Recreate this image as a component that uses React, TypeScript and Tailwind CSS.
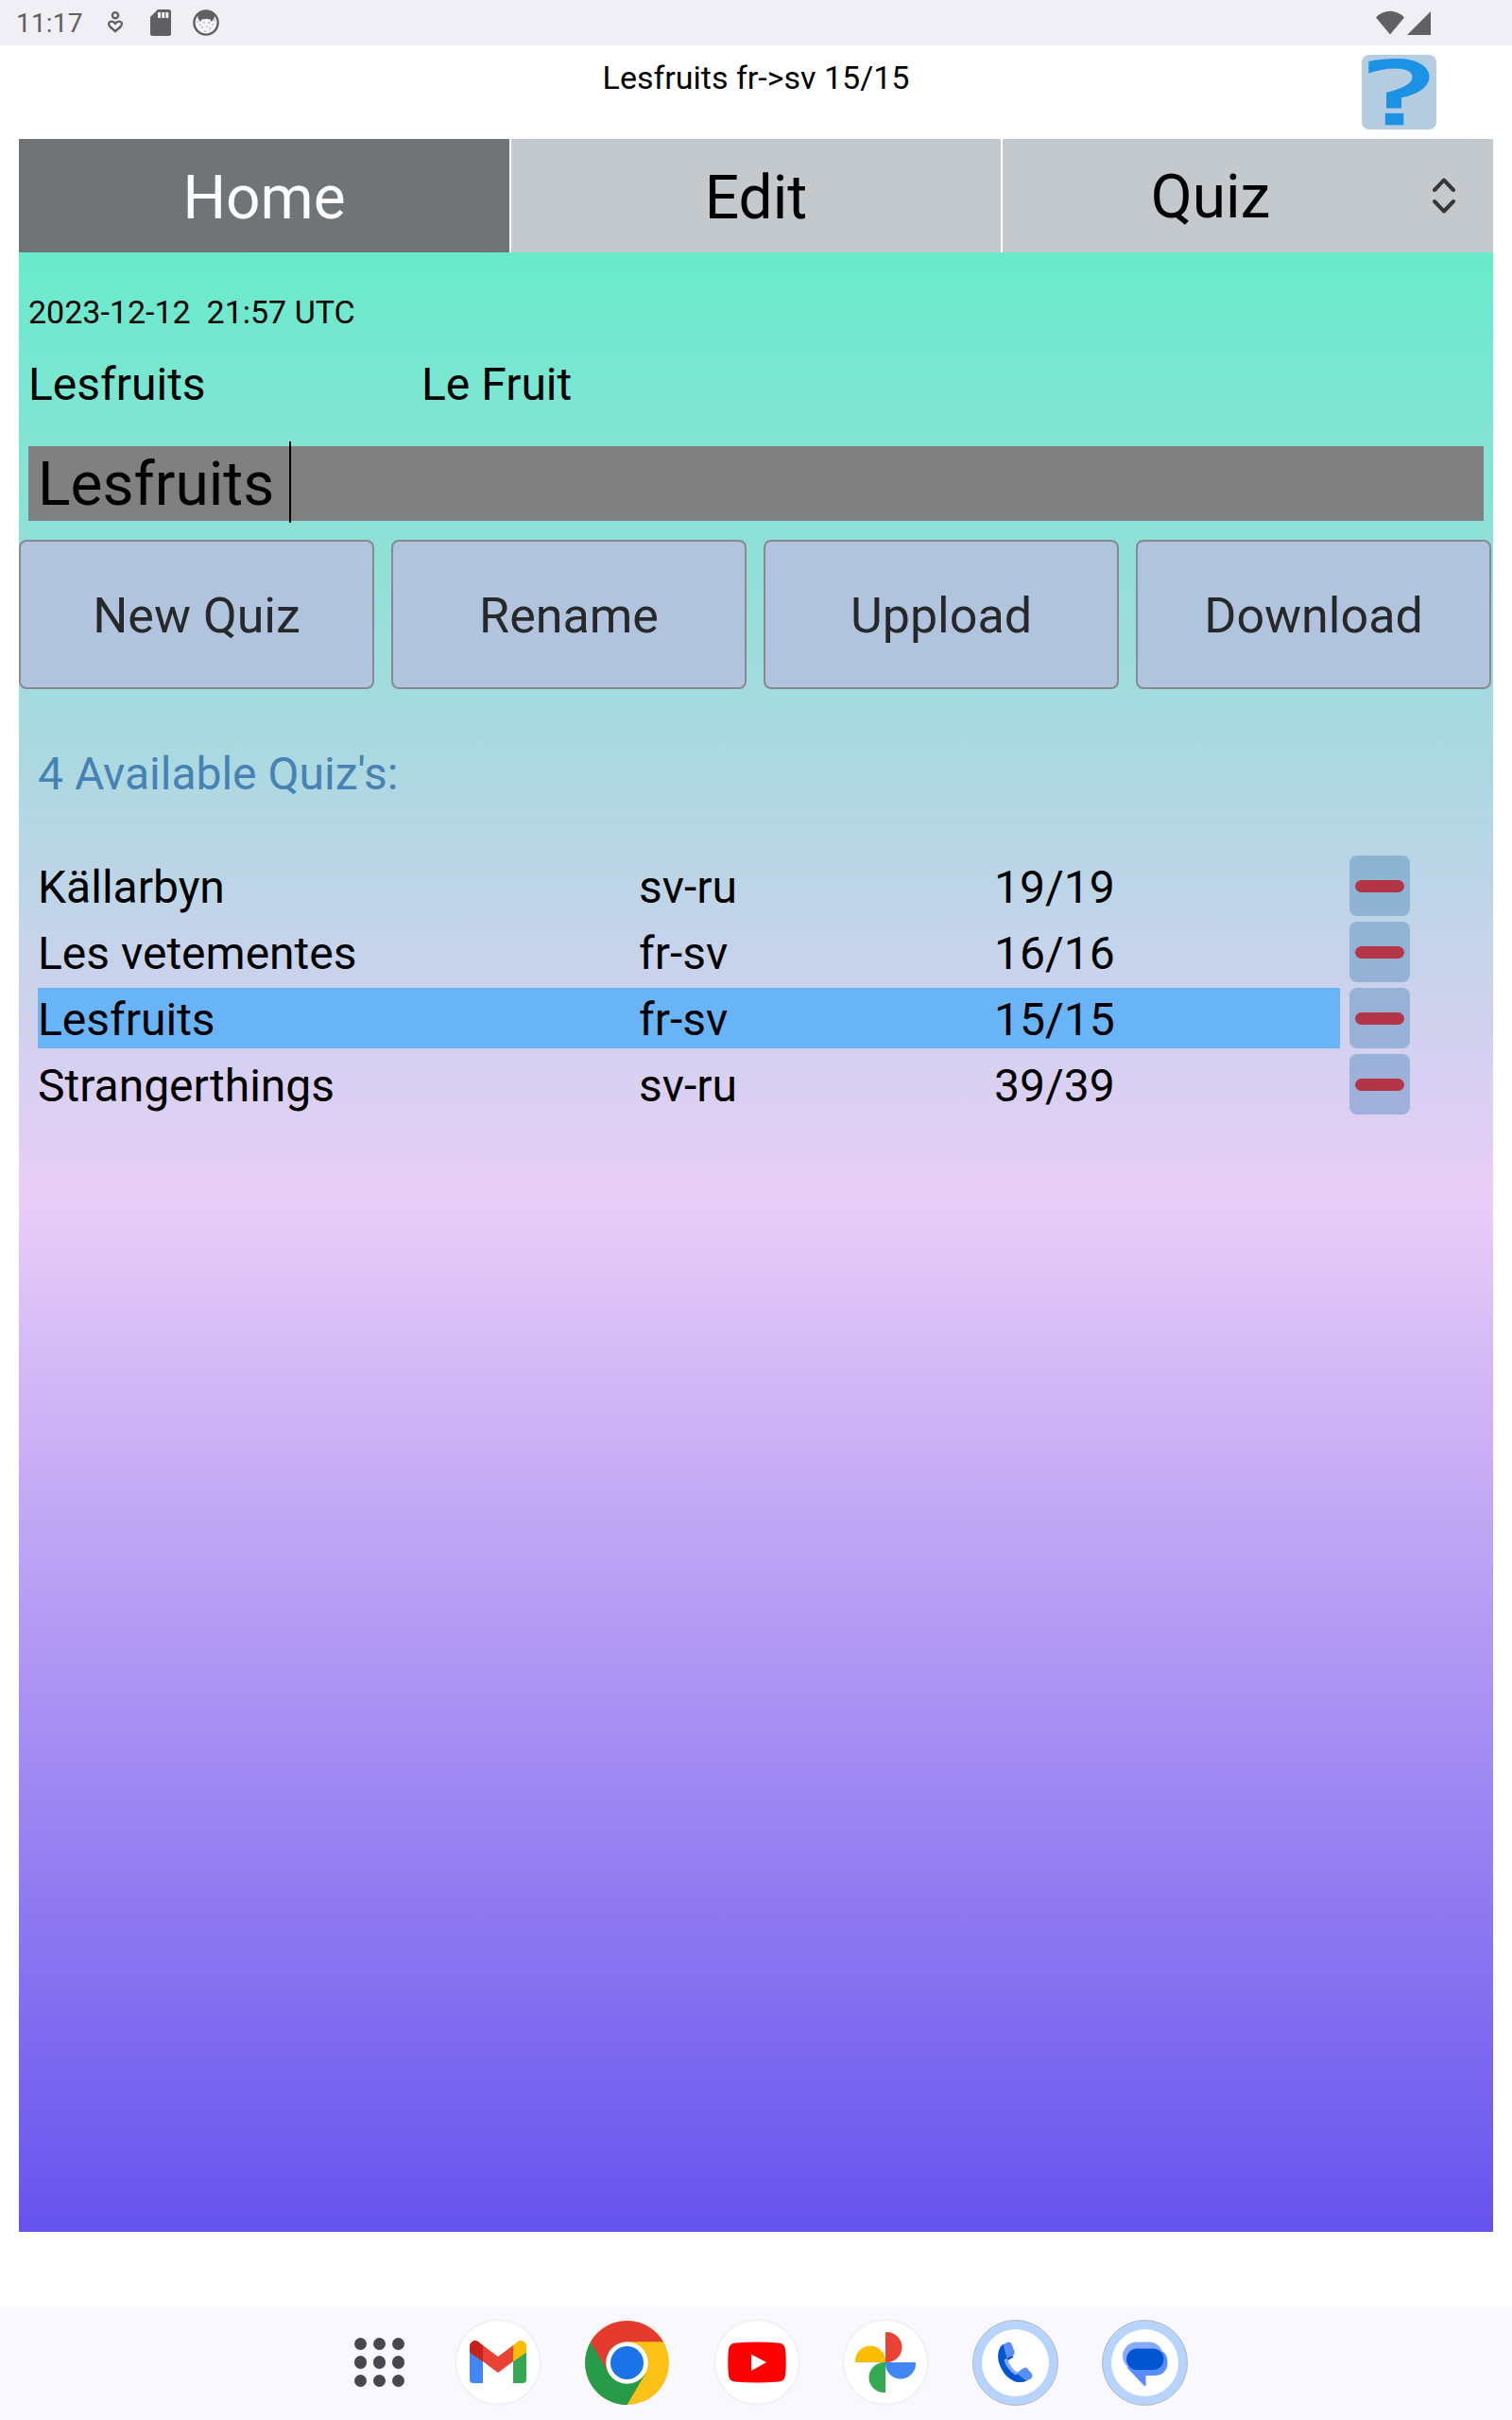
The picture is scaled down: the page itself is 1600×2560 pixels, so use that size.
import React from "react";

const QUIZZES = [
  { name: "Källarbyn", lang: "sv-ru", score: "19/19", active: false },
  { name: "Les vetementes", lang: "fr-sv", score: "16/16", active: false },
  { name: "Lesfruits", lang: "fr-sv", score: "15/15", active: true },
  { name: "Strangerthings", lang: "sv-ru", score: "39/39", active: false },
];

function StatusBar() {
  return (
    <header className="flex h-12 items-center bg-[#f0eff6] pl-[17px] pr-[86px] text-[#606062]">
      <span className="w-[89px] pt-[2px] text-[28px] leading-[48px] tracking-[0.2px]">11:17</span>
      <svg className="ml-[6px]" width="20" height="26" viewBox="0 0 20 26" fill="none" stroke="#606062" strokeWidth="2.4">
        <circle cx="10" cy="5.2" r="3.1" />
        <path d="M10 22.2L4.2 17C2 14.8 3.2 11.6 6 11.6C8 11.6 9.2 12.8 10 14C10.8 12.8 12 11.6 14 11.6C16.8 11.6 18 14.8 15.8 17Z" strokeLinejoin="round" />
      </svg>
      <svg className="ml-[27px]" width="22" height="28" viewBox="0 0 22 28">
        <path d="M8 0H19.5Q22 0 22 2.5V25.5Q22 28 19.5 28H2.5Q0 28 0 25.5V8Z" fill="#606062" />
        <path d="M8 3h3v6H8zM12.2 3h3v6h-3zM16.3 3h3v6h-3z" fill="#f0eff6" />
      </svg>
      <svg className="ml-[23px]" width="28" height="28" viewBox="0 0 28 28">
        <circle cx="14" cy="14" r="12.6" fill="#f4f3fa" stroke="#606062" strokeWidth="2.4" />
        <path d="M5 5.5C10 .5 18 .5 23 5.5C23.5 8 22 11.5 19.5 13L18.5 10.5Q14 9.5 9.5 10.5L8 13C6 11 5 8 5 5.5Z" fill="#606062" />
        <g fill="#8a8a8d">
          <circle cx="8" cy="16" r=".7" /><circle cx="12" cy="14" r=".7" /><circle cx="17" cy="14" r=".8" />
          <circle cx="21" cy="16" r=".7" /><circle cx="10" cy="19" r=".8" /><circle cx="15" cy="18" r=".7" />
          <circle cx="18" cy="20" r=".7" /><circle cx="13" cy="23" r=".8" /><circle cx="23" cy="12" r=".7" />
          <circle cx="5" cy="13" r=".7" />
        </g>
      </svg>
      <svg className="ml-auto" width="30" height="26" viewBox="0 0 30 26">
        <path d="M0 7.5Q6.500 .8 15 .8T30 7.5L15 25.5Z" fill="#606062" />
      </svg>
      <svg className="ml-[3px]" width="25" height="26" viewBox="0 0 25 26">
        <path d="M25 1V26H0Z" fill="#606062" />
      </svg>
    </header>
  );
}

function TitleBar() {
  return (
    <div className="grid h-[99px] grid-cols-[1fr_400px_1fr] px-5">
      <span />
      <h1 className="mt-[10px] text-center text-[34px] leading-[48px]">Lesfruits fr-&gt;sv 15/15</h1>
      <button className="mt-[10px] mr-[60px] h-[79px] w-[79px] justify-self-end rounded-[8px] bg-[#b5cde1]">
        <svg width="79" height="79" viewBox="0 0 79 79" fill="#1c92e4">
          <path d="M7.3 7C17 4.8 27 4 37 4C58 4 71.500 12 71.500 23C71.500 33 62 41 42 45.500V56.500H26V40C43 35.500 53.500 30.500 53.500 23.500C53.500 17.500 46 14.500 35 14.500C25 14.500 16 16.500 7.300 19.500Z" />
          <rect x="24.8" y="61.8" width="19.5" height="12.5" />
        </svg>
      </button>
    </div>
  );
}

function Tabs() {
  return (
    <nav className="grid h-[120px] grid-cols-[519px_518px_519px] gap-x-[2px] bg-white text-center text-[64px] leading-[124px]">
      <span className="h-[120px] bg-[#707476] leading-[125px] text-white">Home</span>
      <span className="h-[120px] bg-[#c4c9cd] leading-[125px]">Edit</span>
      <span className="flex h-[120px] items-center bg-[#c4c9cd]">
        <span className="flex-1 pt-[4px] pr-[15px] leading-[120px]">Quiz</span>
        <svg className="mr-[40px]" width="24" height="40" viewBox="0 0 24 40" fill="none" stroke="#353739" strokeWidth="4" strokeLinecap="round" strokeLinejoin="round">
          <path d="M2 14L12 3.500L22 14M2 26L12 36.500L22 26" />
        </svg>
      </span>
    </nav>
  );
}

function QuizList() {
  return (
    <ul className="mt-[56px] ml-5 flex flex-col gap-[6px] text-[48px] leading-[67px]">
      {QUIZZES.map((q) => (
        <li key={q.name} className="flex h-16 gap-[10px]">
          <div className={q.active ? "grid h-16 w-[1378px] grid-cols-[636px_376px_1fr] bg-[#69b4f6]" : "grid h-16 w-[1378px] grid-cols-[636px_376px_1fr]"}>
            <span>{q.name}</span>
            <span>{q.lang}</span>
            <span>{q.score}</span>
          </div>
          <button className="flex h-16 w-16 items-center justify-center rounded-[8px] bg-[#4682b466]">
            <span className="h-[13px] w-[52px] rounded-full bg-[#b53548]" />
          </button>
        </li>
      ))}
    </ul>
  );
}

function Dock() {
  const round = "flex h-[88px] w-[88px] items-center justify-center rounded-full bg-white shadow-[0_0_3px_rgba(0,0,0,0.12)]";
  const ringed = "flex h-[91px] w-[91px] items-center justify-center rounded-full border border-[#b4b8c4] bg-[#b7d4fe]";
  return (
    <footer className="flex h-[120px] items-center bg-[#f9f8ff] pb-[2px] pl-[375px]">
      <div className="grid grid-cols-3 gap-[6.5px]">
        {[0, 1, 2, 3, 4, 5, 6, 7, 8].map((i) => (
          <span key={i} className="h-[13.3px] w-[13.3px] rounded-full bg-[#474750]" />
        ))}
      </div>
      <div className={`ml-[54.7px] ${round}`}>
        <svg width="60" height="46" viewBox="0 0 60 46">
          <path d="M0 12L14 20V45H4Q0 45 0 41Z" fill="#4285f4" />
          <path d="M60 12L46 20V45H56Q60 45 60 41Z" fill="#34a853" />
          <path d="M14 5L30 17L46 5V22L30 34L14 22Z" fill="#ea4335" />
          <path d="M14 5V22.300L0 12.500V6.500C0 1 6 -2 10 1.800Z" fill="#c5221f" />
          <path d="M46 5V22.300L60 12.500V6.500C60 1 54 -2 50 1.800Z" fill="#fbbc04" />
        </svg>
      </div>
      <svg className="ml-[48.4px]" width="89" height="89" viewBox="0 0 89 89">
        <circle cx="44.5" cy="44.5" r="44.5" fill="#fbc116" />
        <path d="M6 22.250A44.500 44.500 0 0 1 83 22.250H44.500L22 58Z" fill="#e33b2e" />
        <path d="M6 22.250A44.500 44.500 0 0 0 44.500 89L64 56L25 55Z" fill="#279b49" />
        <circle cx="44.5" cy="44.5" r="22.3" fill="#fff" />
        <circle cx="44.5" cy="44.5" r="17.5" fill="#1a73e8" />
      </svg>
      <div className={`ml-[48.6px] ${round}`}>
        <svg width="62" height="44" viewBox="0 0 62 44">
          <path d="M8 1.500Q31 -.5 54 1.500Q60 2 61 8Q62.500 22 61 36Q60 42 54 42.500Q31 44.500 8 42.500Q2 42 1 36Q-.5 22 1 8Q2 2 8 1.500Z" fill="#f00" />
          <path d="M25 13.500V31L41 22Z" fill="#fff" />
        </svg>
      </div>
      <div className={`ml-[48.8px] ${round}`}>
        <svg width="64" height="64" viewBox="0 0 64 64">
          <path d="M32 32V0H33.500A15.800 15.800 0 0 1 33.500 32Z" fill="#ea4335" />
          <path d="M32 32H0V30.500A15.800 15.800 0 0 1 32 30.500Z" fill="#fbbc04" />
          <path d="M32 32V64H30.500A15.800 15.800 0 0 1 30.500 32Z" fill="#34a853" />
          <path d="M32 32H64V33.500A15.800 15.800 0 0 1 32 33.500Z" fill="#4285f4" />
        </svg>
      </div>
      <div className={`ml-[48px] ${ringed}`}>
        <svg width="89" height="89" viewBox="0.5 0.5 89 89">
          <circle cx="45" cy="45" r="35.5" fill="#fff" />
          <path d="M32 25L43 39L36 43Q40 54 48 57L57 64Q52 66.500 45 65Q32 60 27 43Q25 31 32 25Z" fill="#0056d0" />
          <path d="M32 26L36 23.500Q39 22 41 25L44 33Q44.500 36 42 37.500L36 40Z" fill="#598dff" />
          <path d="M33 42L36 40Q40 51 48 56L45 58Q35 51 33 42Z" fill="#88a9ff" />
          <path d="M46 56L53 51Q56 49 58 51.500L62 56Q64.500 59.500 61 62L57 64Z" fill="#598dff" />
        </svg>
      </div>
      <div className={`ml-[46px] ${ringed}`}>
        <svg width="89" height="89" viewBox="0.5 0.5 89 89">
          <circle cx="45" cy="45" r="35.5" fill="#fff" />
          <rect x="21.5" y="23" width="43" height="30" rx="15" fill="#88a9ff" />
          <path d="M26 50L64 33Q69 37 69 44Q69 58 55 58.500H46V69.500Q45 70 43.500 68.500Z" fill="#598dff" />
          <rect x="25.5" y="30" width="39.5" height="22.5" rx="11.25" fill="#0056d0" />
        </svg>
      </div>
    </footer>
  );
}

export default function App() {
  return (
    <div className="flex h-[2560px] w-[1600px] flex-col bg-white font-['Roboto',sans-serif] text-black">
      <StatusBar />
      <TitleBar />
      <main className="mx-5 flex h-[2214px] flex-col">
        <Tabs />
        <section className="flex-1 bg-[linear-gradient(to_bottom,#68ebcb_0%,#b3d7e3_28.3%,#e9cdf8_47.8%,#6653ee_100%)]">
          <p className="ml-[10px] pt-[43px] text-[34px] leading-10 whitespace-pre">2023-12-12  21:57 UTC</p>
          <div className="mt-[27px] ml-[10px] grid grid-cols-[416px_1fr] text-[48px] leading-[60px]">
            <span>Lesfruits</span>
            <span>Le Fruit</span>
          </div>
          <div className="mx-[10px] mt-[35px] flex h-[79px] items-center bg-[#808080] pl-[10px] text-[64px] leading-[79px] whitespace-pre">
            <span className="pt-[2px]">Lesfruits </span>
            <span className="-mt-[5px] -mb-[2px] h-[86px] w-[2px] bg-black" />
          </div>
          <div className="mt-[20px] grid grid-cols-[repeat(4,376px)] gap-[18px]">
            {["New Quiz", "Rename", "Uppload", "Download"].map((t) => (
              <button key={t} className="h-[158px] rounded-[8px] border-2 border-[#868b92] bg-[#b0c4de] pt-[3px] text-[52px] leading-[60px] text-[#26282a]">
                {t}
              </button>
            ))}
          </div>
          <h2 className="mt-[60px] ml-5 text-[48px] leading-[60px] text-[#4682b4]">4 Available Quiz's:</h2>
          <QuizList />
        </section>
      </main>
      <div className="h-[79px]" />
      <Dock />
    </div>
  );
}
